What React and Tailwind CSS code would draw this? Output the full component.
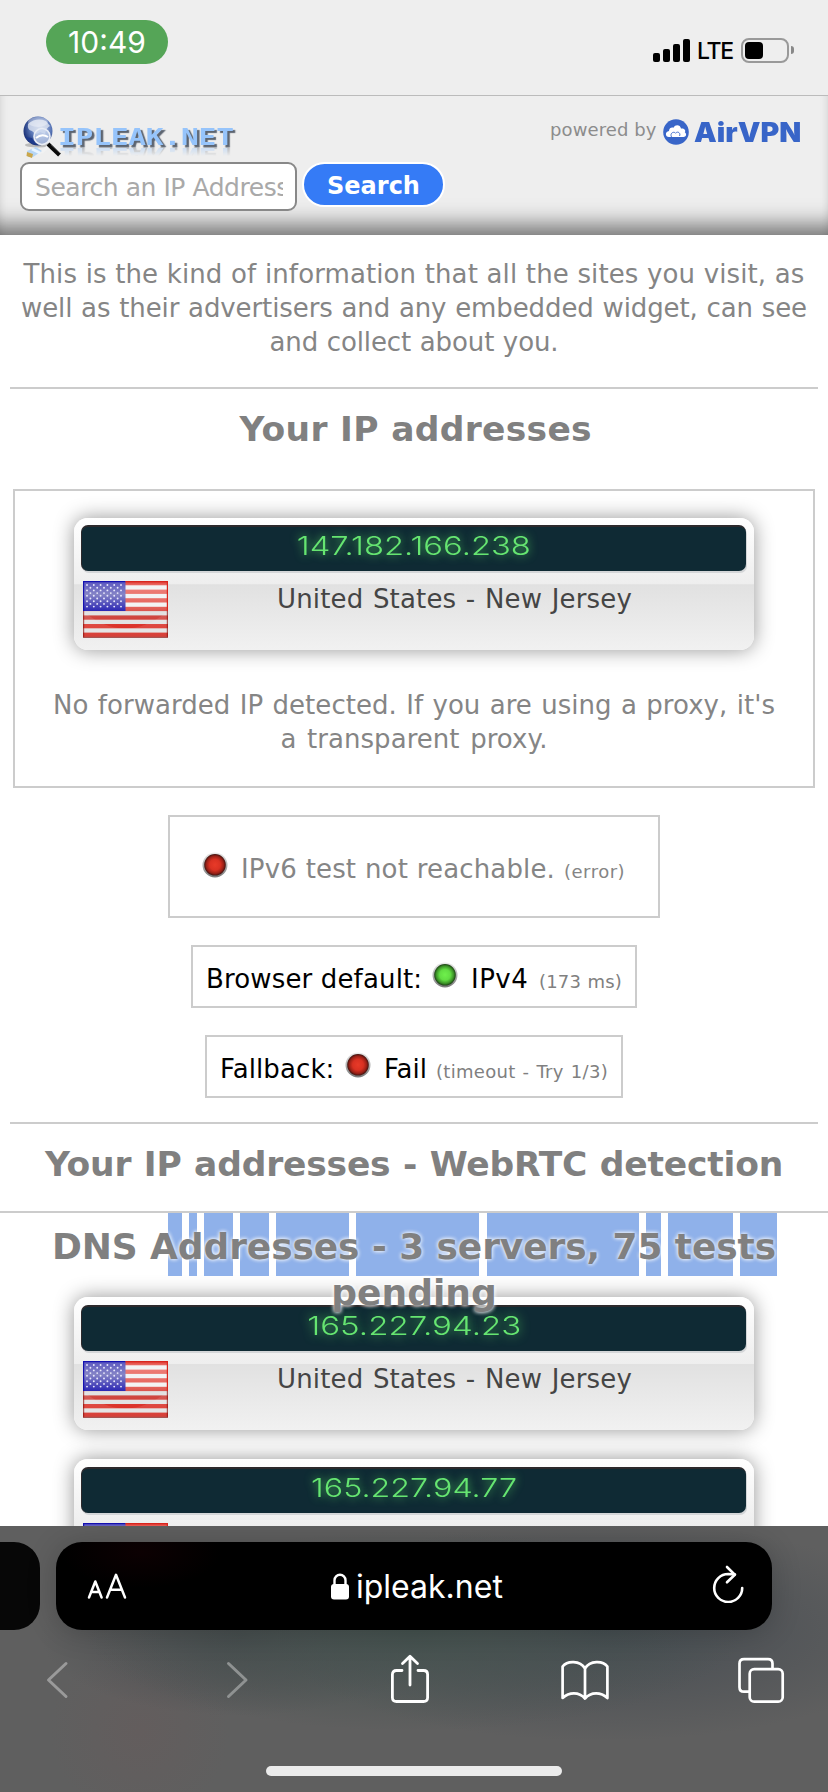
import React from 'react';

const VERDANA = "font-['DejaVu_Sans',Verdana,sans-serif]";

function Line({ className = '', children }) {
  return <div className={`whitespace-nowrap [text-align-last:justify] ${className}`}>{children}</div>;
}

function Globe() {
  return (
    <svg className="block h-[44px] w-[42px] shrink-0" viewBox="0 0 42 44">
      <defs>
        <radialGradient id="globe" cx="0.6" cy="0.4" r="0.65">
          <stop offset="0" stopColor="#b9c6e6" />
          <stop offset="0.55" stopColor="#5b78b8" />
          <stop offset="1" stopColor="#142a70" />
        </radialGradient>
      </defs>
      <ellipse cx="16" cy="29" rx="13" ry="2.5" fill="#9a9a9a" opacity="0.6" />
      <circle cx="16" cy="15" r="14.5" fill="url(#globe)" />
      <path d="M6 8 Q14 1 24 5 L28 10 Q24 12 23 18 L18 16 Q14 20 10 15 Q5 14 6 8Z" fill="#dfe5f1" opacity="0.8" />
      <path d="M3 21 Q7 27 14 29 L10 22Z" fill="#1d3a8c" />
      <ellipse cx="16" cy="6" rx="10" ry="5" fill="#fff" opacity="0.35" />
      <path d="M13 37 Q22 37 26 30" stroke="#f2f2f2" strokeWidth="3" fill="none" />
      <circle cx="20" cy="20.500" r="8" fill="#c8d6ee" fillOpacity="0.75" stroke="#e9edf5" strokeWidth="1.600" />
      <path d="M14 22 Q20 17 26 21" stroke="#fff" strokeWidth="2" fill="none" />
      <path d="M26 28 L37.500 39" stroke="#0a0a0a" strokeWidth="4" />
      <path d="M29 28.500 L38 37" stroke="#888" strokeWidth="0.8" />
      <path d="M5 35 L14 31 L20 35 L11 41 L6 41Z" fill="#b5d5f5" />
      <path d="M10 33 L18 37" stroke="#e8f4ff" strokeWidth="3" />
      <path d="M5 36 L11 38 L10 42 L4.500 40Z" fill="#c9a64b" />
    </svg>
  );
}

function Flag() {
  const stripes = [0, 2, 4, 6, 8, 10, 12];
  const rows = [0, 1, 2, 3, 4, 5, 6, 7, 8];
  return (
    <svg className="block h-[57px] w-[85px]" viewBox="0 0 85 57">
      <defs>
        <linearGradient id="canton" x1="0" y1="0" x2="0" y2="1">
          <stop offset="0" stopColor="#5a56c0" />
          <stop offset="0.45" stopColor="#8584c6" />
          <stop offset="1" stopColor="#2c27b4" />
        </linearGradient>
        <linearGradient id="stripe" x1="0" y1="0" x2="0" y2="57" gradientUnits="userSpaceOnUse">
          <stop offset="0" stopColor="#e0352d" />
          <stop offset="0.1" stopColor="#ee817b" />
          <stop offset="0.45" stopColor="#e5625b" />
          <stop offset="0.6" stopColor="#cd4a44" />
          <stop offset="0.8" stopColor="#dd3229" />
          <stop offset="1" stopColor="#cf2a22" />
        </linearGradient>
      </defs>
      <rect width="85" height="57" fill="#f3f3f4" />
      <rect y="30" width="85" height="27" fill="#e2e2e2" />
      {stripes.map((i) => (
        <rect key={i} y={i * 4.3} width="85" height="4.300" fill="url(#stripe)" />
      ))}
      <path d="M1 31 Q42 64 84 31 L84 56 L1 56Z" fill="#fff" opacity="0.1" />
      <rect width="42.500" height="30" fill="url(#canton)" />
      <path d="M0.600 30 V0.600 H42.500" stroke="#1410b0" strokeWidth="1.200" fill="none" />
      {rows.map((r) =>
        (r % 2 ? [0, 1, 2, 3, 4] : [0, 1, 2, 3, 4, 5]).map((c) => (
          <circle key={`${r}-${c}`} cx={4 + c * 6.8 + (r % 2 ? 3.4 : 0)} cy={4 + r * 2.7} r="0.950" fill="#e8e8fa" />
        ))
      )}
      <path d="M42.500 0.600 H84.400 V30" stroke="#d8241c" strokeWidth="1.200" fill="none" />
      <path d="M0.600 30 V56.400 H84.400 V30" stroke="#8e1a15" strokeOpacity="0.7" strokeWidth="1.200" fill="none" />
    </svg>
  );
}

function IpCard({ ip, ipClass, tall }) {
  return (
    <div
      className={`w-[680px] shrink-0 rounded-[14px] pl-[7px] pr-[8px] shadow-[0_0_20px_rgba(0,0,0,0.42)] bg-[linear-gradient(to_bottom,#ffffff_0%,#eeeeee_50%,#e1e1e1_50.5%,#f1f1f1_100%)] ${
        tall ? 'h-[133px] pt-[8px]' : 'h-[132px] pt-[7px]'
      }`}
    >
      <div className="flex h-[46px] justify-center rounded-[7px] border-l border-t-2 border-[#2c292c] bg-[#0f2a34] shadow-[1px_2px_0_#d4d6d8]">
        <div
          className={`origin-center whitespace-nowrap pt-px font-['Inter',sans-serif] text-[26px] leading-[35px] font-light text-[#66e571] [text-shadow:0_0_9px_#4fc65c] ${ipClass}`}
        >
          {ip}
        </div>
      </div>
      <div className="flex pt-[10px] pl-[2px]">
        <Flag />
        <div className="flex flex-1 pl-[109px]">
          <Line className="mt-[1px] h-[34px] w-[355px] text-[26px] leading-[34px] tracking-[0.15px] text-[#454545]">
            United States - New Jersey
          </Line>
        </div>
      </div>
    </div>
  );
}

function Dot({ green }) {
  return (
    <svg className="block h-[26px] w-[26px] shrink-0" viewBox="0 0 26 26">
      <defs>
        <radialGradient id="dotRed">
          <stop offset="0" stopColor="#e83a28" />
          <stop offset="0.5" stopColor="#d93122" />
          <stop offset="0.8" stopColor="#9a2016" />
          <stop offset="1" stopColor="#3d1310" />
        </radialGradient>
        <radialGradient id="dotGreen">
          <stop offset="0" stopColor="#6ff04c" />
          <stop offset="0.5" stopColor="#62dd43" />
          <stop offset="0.8" stopColor="#3d9428" />
          <stop offset="1" stopColor="#1b3d14" />
        </radialGradient>
        <linearGradient id="rim" x1="0" y1="0" x2="0" y2="1">
          <stop offset="0" stopColor="#ececec" />
          <stop offset="1" stopColor="#777" />
        </linearGradient>
      </defs>
      <circle cx="13" cy="13" r="12.500" fill="url(#rim)" />
      <circle cx="13" cy="12.800" r="10.800" fill={green ? 'url(#dotGreen)' : 'url(#dotRed)'} />
    </svg>
  );
}

function StatusBar() {
  return (
    <div className="flex h-[96px] items-start justify-between border-b border-[#bbbbbb] bg-[#eeeeee] pl-[46px] pr-[34px] font-['Inter',sans-serif]">
      <div className="mt-[20px] flex h-[44px] w-[122px] items-center justify-center rounded-[22px] bg-[#55a557] text-[30px] font-normal text-white">
        10:49
      </div>
      <div className="mt-[37px] flex h-[26px] items-center">
        <div className="flex h-[23px] items-end gap-[3px]">
          <div className="h-[9px] w-[7px] rounded-[2px] bg-black" />
          <div className="h-[13px] w-[7px] rounded-[2px] bg-black" />
          <div className="h-[18px] w-[7px] rounded-[2px] bg-black" />
          <div className="h-[23px] w-[7px] rounded-[2px] bg-black" />
        </div>
        <div className="ml-[7px] w-[44px] text-[23px] leading-[28px] tracking-[-1.3px] pt-[1px] font-medium text-black">LTE</div>
        <div className="flex h-[25px] w-[48px] items-center rounded-[8px] border-2 border-[#999999] pl-[2px]">
          <div className="h-[17px] w-[18px] rounded-[4px] bg-black" />
        </div>
        <div className="ml-[2px] h-[8px] w-[3px] rounded-r-full bg-[#888888]" />
      </div>
    </div>
  );
}

function SiteHeader() {
  return (
    <div className="h-[139px] bg-[#eeeeee] pl-[20px] pr-[26px] pt-[20px] shadow-[inset_0_-32px_22px_-22px_rgba(0,0,0,0.52),inset_8px_0_8px_-8px_rgba(0,0,0,0.12),inset_-8px_0_8px_-8px_rgba(0,0,0,0.12)]">
      <div className="flex h-[46px] justify-between">
        <div className="flex pl-[2px]">
          <Globe />
          <div className="ml-[-6px] mt-[9px] h-[24px] w-[177px]">
            <div className="h-[24px] w-max origin-left scale-x-[1.26] font-['DejaVu_Sans_Mono',monospace] text-[23.500px] leading-[24px] font-bold tracking-[-0.2px] text-[#96c4fb] [text-shadow:2px_2px_1px_#5c6470] [-webkit-box-reflect:below_-5px_linear-gradient(transparent_50%,rgba(0,0,0,0.55))]">
              IPLEAK.NET
            </div>
          </div>
        </div>
        <div className="flex">
          <Line className={`mt-px w-[105px] text-[18px] leading-[26px] tracking-[0.1px] text-[#8c8c8c] ${VERDANA}`}>powered by</Line>
          <svg className="mt-[3px] ml-[8px] block h-[26px] w-[26px]" viewBox="0 0 26 26">
            <circle cx="13" cy="13" r="12.800" fill="#3865c8" />
            <path d="M6 18 C2 18 1.800 12.500 6 12 C6 8.500 9 8 10.500 8.700 C12 5 17.500 5.500 18 9.500 C22 9 23 12 21.800 13.300 C24.200 15 23 18 20.500 18Z" fill="#fff" />
            <path d="M8.500 18 C6.500 14 11 12 12.500 14.200 C15 11.500 18 14.500 16.500 17" fill="none" stroke="#3865c8" strokeWidth="0.9" />
          </svg>
          <div className="ml-[5px] w-[108px]">
            <div className="w-max origin-left scale-x-[1.06] whitespace-nowrap font-['Inter',sans-serif] text-[27px] leading-[33px] font-black text-[#3865c8]">AirVPN</div>
          </div>
        </div>
      </div>
      <div className="flex">
        <div className="h-[49px] w-[277px] rounded-[9px] border-2 border-[#888888] bg-white pl-[13px] pr-[12px]">
          <div className={`h-full overflow-hidden whitespace-nowrap text-[25px] leading-[47px] tracking-[-0.45px] text-[#a9a9a9] ${VERDANA}`}>
            Search an IP Address
          </div>
        </div>
        <div className={`ml-[5px] flex h-[45px] w-[143px] items-center justify-center rounded-full border-2 border-white bg-[#357bf6] text-[24px] font-bold text-white ${VERDANA}`}>
          <div className="mt-[3px] text-center">Search</div>
        </div>
      </div>
    </div>
  );
}

const highlights = [
  [168, 14], [189, 8], [204, 29], [240, 29], [276, 73], [356, 123], [487, 152], [646, 15], [668, 65], [740, 37],
];

function Heading({ className, children }) {
  return (
    <div className={`mx-auto text-[34.500px] leading-[46px] font-bold whitespace-nowrap [text-align-last:justify] text-[#808080] ${className}`}>{children}</div>
  );
}

function Toolbar() {
  return (
    <div className="relative h-[266px] shrink-0 overflow-hidden bg-[#5f5f5f] bg-[radial-gradient(ellipse_330px_100px_at_414px_105px,#45524f_0%,transparent_100%),radial-gradient(ellipse_330px_110px_at_600px_105px,#464c52_0%,transparent_100%),radial-gradient(ellipse_200px_80px_at_240px_110px,#484b4e_0%,transparent_100%),radial-gradient(ellipse_90px_90px_at_140px_205px,#635d5d_0%,transparent_100%)]">
      <div className="flex pt-[16px]">
        <div className="h-[88px] w-[40px] rounded-r-[26px] bg-[#070707]" />
        <div className="ml-[16px] flex h-[88px] w-[716px] items-center rounded-[26px] bg-black bg-[radial-gradient(ellipse_80px_36px_at_85px_10px,#0c0002,transparent)] shadow-[0_2px_30px_rgba(0,0,0,0.2)] font-['Inter',sans-serif] text-white">
          <svg className="ml-[31px] block h-[27px] w-[41px]" viewBox="0 0 41 27" fill="none" stroke="#fff" strokeWidth="2.500" strokeLinecap="round" strokeLinejoin="round">
            <path d="M2 24.500 L8.300 8.500 L14.600 24.500 M4.300 19 H12.300" />
            <path d="M20 24.500 L29 1.800 L38 24.500 M23.200 16.800 H34.800" />
          </svg>
          <div className="ml-[203px] flex w-[171px] items-center">
            <svg className="block h-[27px] w-[18px] shrink-0" viewBox="0 0 18 27">
              <rect x="0" y="11" width="18" height="15.500" rx="3" fill="#fff" />
              <path d="M3.500 12 V7.200 a5.500 5.500 0 0 1 11 0 V12" fill="none" stroke="#fff" strokeWidth="2.400" />
            </svg>
            <div className="ml-[7px] w-[147px] text-[32px] leading-[40px] pt-px whitespace-nowrap">ipleak.net</div>
          </div>
          <svg className="ml-[210px] mt-[-4px] block h-[38px] w-[32px]" viewBox="0 0 32 38" fill="none" stroke="#fff" strokeWidth="2.600" strokeLinecap="round" strokeLinejoin="round">
            <path d="M30.200 23 A14 14 0 1 1 16.200 9 L23 9.500" />
            <path d="M15 2 L22.800 9.700 L15 17.300" />
          </svg>
        </div>
      </div>
      <div className="flex h-[100px] pl-[46px] pt-[20px] text-white">
        <svg className="mt-[10px] block h-[40px] w-[24px]" viewBox="0 0 24 40" fill="none" stroke="#9a9a9a" strokeWidth="3" strokeLinecap="round" strokeLinejoin="round">
          <path d="M20 3.500 L2.500 20 L20 36.500" />
        </svg>
        <svg className="ml-[156px] mt-[10px] block h-[40px] w-[24px]" viewBox="0 0 24 40" fill="none" stroke="#8f9292" strokeWidth="3" strokeLinecap="round" strokeLinejoin="round">
          <path d="M2.500 3.500 L20 20 L2.500 36.500" />
        </svg>
        <svg className="ml-[140px] block h-[54px] w-[40px]" viewBox="0 0 40 54" fill="none" stroke="#fff" strokeWidth="2.800" strokeLinecap="round" strokeLinejoin="round">
          <path d="M12 20.500 H6.500 Q2.400 20.500 2.400 24.500 V47.500 Q2.400 51.500 6.500 51.500 H33.500 Q37.600 51.500 37.600 47.500 V24.500 Q37.600 20.500 33.500 20.500 H28" />
          <path d="M20 35 V6.500 M12.500 13.500 L20 6.300 L27.500 13.500" />
        </svg>
        <svg className="ml-[130px] mt-[9px] block h-[44px] w-[50px]" viewBox="0 0 50 44" fill="none" stroke="#fff" strokeWidth="2.700" strokeLinecap="round" strokeLinejoin="round">
          <path d="M25 9.500 C20 1 7 1.500 2.600 7.500 V39 C9 33 19 32.500 25 39.500 C31 32.500 41 33 47.400 39 V7.500 C43 1.500 30 1 25 9.500 V39" />
        </svg>
        <svg className="ml-[127px] mt-[6px] block h-[48px] w-[48px]" viewBox="0 0 48 48" fill="none" stroke="#fff" strokeWidth="2.700">
          <rect x="12.700" y="13.200" width="33" height="32.500" rx="4.500" />
          <path d="M12 35.700 H7 Q2.500 35.700 2.500 31.200 V7.500 Q2.500 3.200 7 3.200 H31 Q35.500 3.200 35.500 7.500 V12.500" />
        </svg>
      </div>
      <div className="mx-auto mt-[36px] h-[10px] w-[296px] rounded-full bg-[#ebebeb]" />
    </div>
  );
}

export default function App() {
  return (
    <div className="flex h-[1792px] w-[828px] flex-col overflow-hidden bg-white">
      <StatusBar />
      <main className={`h-[1430px] overflow-hidden bg-white text-[26px] leading-[34px] text-[#858585] ${VERDANA}`}>
        <SiteHeader />
        <div className="flex h-[152px] flex-col items-center pt-[22px]">
          <Line className="w-[781px] tracking-[0.1px]">This is the kind of information that all the sites you visit, as</Line>
          <Line className="w-[786px] tracking-[-0.1px]">well as their advertisers and any embedded widget, can see</Line>
          <Line className="w-[289px] tracking-[-0.1px]">and collect about you.</Line>
        </div>
        <div className="mx-[10px] h-[2px] bg-[#cccccc]" />
        <div className="h-[100px] pt-[17px]">
          <Heading className="w-[349px] tracking-[0.3px]">Your IP addresses</Heading>
        </div>

        <section className="mx-auto flex h-[299px] w-[802px] flex-col items-center border-2 border-[#cccccc] pt-[27px]">
          <IpCard ip="147.182.166.238" ipClass="scale-x-[1.26]" />
          <Line className="mt-[38px] w-[722px] tracking-[0.05px]">No forwarded IP detected. If you are using a proxy, it&apos;s</Line>
          <Line className="w-[267px] tracking-[0.05px]">a transparent proxy.</Line>
        </section>

        <section className="mx-auto mt-[27px] flex h-[103px] w-[492px] border-2 border-[#cccccc] pl-[32px] pt-[35px]">
          <Dot />
          <Line className="ml-[13px] w-[314px] tracking-[0.15px]">IPv6 test not reachable.</Line>
          <div className="ml-[9px] pt-[3px] text-[18px] tracking-[0.5px]">(error)</div>
        </section>
        <section className="mx-auto mt-[27px] flex h-[63px] w-[446px] border-2 border-[#cccccc] pl-[13px] pt-[15px] text-black">
          <Line className="w-[216px] tracking-[0.15px]">Browser default:</Line>
          <div className="ml-[10px]"><Dot green /></div>
          <div className="ml-[13px] w-[58px] tracking-[0.5px]">IPv4</div>
          <Line className="ml-[10px] w-[83px] pt-[3px] text-[18px] tracking-[0.2px] text-[#808080]">(173 ms)</Line>
        </section>
        <section className="mx-auto mt-[27px] flex h-[63px] w-[418px] border-2 border-[#cccccc] pl-[13px] pt-[15px] text-black">
          <div className="w-[114px] tracking-[0.1px]">Fallback:</div>
          <div className="ml-[11px]"><Dot /></div>
          <div className="ml-[13px] w-[43px]">Fail</div>
          <Line className="ml-[9px] w-[172px] pt-[3px] text-[18px] tracking-[0.3px] text-[#808080]">(timeout - Try 1/3)</Line>
        </section>

        <div className="mx-[10px] mt-[24px] h-[2px] bg-[#cccccc]" />
        <div className="h-[87px] pt-[17px]">
          <Heading className="w-[738px] tracking-[-0.2px]">Your IP addresses - WebRTC detection</Heading>
        </div>
        <div className="h-[2px] bg-[#cccccc]" />

        <section className="relative flex h-[313px] flex-col items-center">
          {highlights.map(([left, width]) => (
            <div key={left} className="absolute top-0 h-[63px] bg-[#8fb1ea]" style={{ left, width }} />
          ))}
          <div className="relative z-10 h-[84px] pt-[10px] text-[36px] leading-[47px] font-bold text-[#808080] [text-shadow:0_0_4px_#fff,0_0_4px_rgba(255,255,255,0.6)]">
            <Line className="w-[724px] tracking-[-0.1px]">DNS Addresses - 3 servers, 75 tests</Line>
            <div className="mt-[-1px] text-center">pending</div>
          </div>
          <IpCard ip="165.227.94.23" ipClass="scale-x-[1.27]" tall />
          <div className="h-[29px] shrink-0" />
          <IpCard ip="165.227.94.77" ipClass="scale-x-[1.24]" tall />
        </section>
      </main>
      <Toolbar />
    </div>
  );
}
